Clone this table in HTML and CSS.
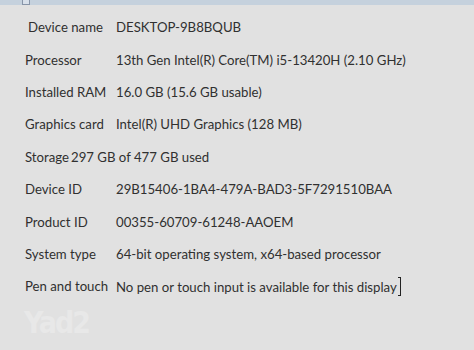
FILE: index.html
```html
<!DOCTYPE html>
<html>
<head>
<meta charset="utf-8">
<link rel="stylesheet" href="styles.css">
</head>
<body>
<div class="topbar"><span class="topbox"></span></div>
<div class="specs">
  <div class="row first"><span class="label">Device name</span><span class="value">DESKTOP-9B8BQUB</span></div>
  <div class="row"><span class="label">Processor</span><span class="value">13th Gen Intel(R) Core(TM) i5-13420H (2.10 GHz)</span></div>
  <div class="row"><span class="label">Installed RAM</span><span class="value">16.0 GB (15.6 GB usable)</span></div>
  <div class="row"><span class="label">Graphics card</span><span class="value">Intel(R) UHD Graphics (128 MB)</span></div>
  <div class="row single"><span class="tight">Storage</span><span class="tight gap">297 GB of 477 GB used</span></div>
  <div class="row"><span class="label">Device ID</span><span class="value">29B15406-1BA4-479A-BAD3-5F7291510BAA</span></div>
  <div class="row"><span class="label">Product ID</span><span class="value">00355-60709-61248-AAOEM</span></div>
  <div class="row"><span class="label">System type</span><span class="value">64-bit operating system, x64-based processor</span></div>
  <div class="row"><span class="label">Pen and touch</span><span class="value">No pen or touch input is available for this display<span class="caret"></span></span></div>
</div>
<div class="watermark">Yad2</div>
</body>
</html>
```
FILE: styles.css
```css
html, body {
  margin: 0;
  padding: 0;
  background: #e1e1e1;
}
body {
  width: 474px;
  height: 350px;
  overflow: hidden;
  font-family: "Lato", "Open Sans", sans-serif;
  font-size: 13.2px;
  color: #303030;
}
.topbar {
  height: 5px;
  background: #c5d1dd;
  position: relative;
}
.topbox {
  position: absolute;
  left: 22px;
  top: -2px;
  width: 6px;
  height: 5px;
  border: 1px solid #8895a8;
  background: #d8e0ea;
}
.specs {
  display: flex;
  flex-direction: column;
  padding: 6px 0 0 25px;
}
.row {
  display: flex;
  align-items: center;
  height: 32.4px;
}
.row.first .label {
  padding-left: 3px;
  width: 88px;
}
.label {
  width: 91px;
  flex: none;
  white-space: nowrap;
}
.value {
  white-space: nowrap;
}
.tight {
  white-space: nowrap;
}
.gap {
  margin-left: 2px;
}
.caret {
  display: inline-block;
  width: 2px;
  height: 17px;
  vertical-align: -4px;
  margin-left: 1px;
  border-top: 1px solid #222;
  border-bottom: 1px solid #222;
  border-right: 1px solid #222;
}
.watermark {
  position: absolute;
  left: 24px;
  top: 306px;
  line-height: 34px;
  font-family: "DejaVu Sans Condensed", "DejaVu Sans", sans-serif;
  font-weight: bold;
  font-size: 30px;
  letter-spacing: -2px;
  color: #e8e8e8;
}
```
